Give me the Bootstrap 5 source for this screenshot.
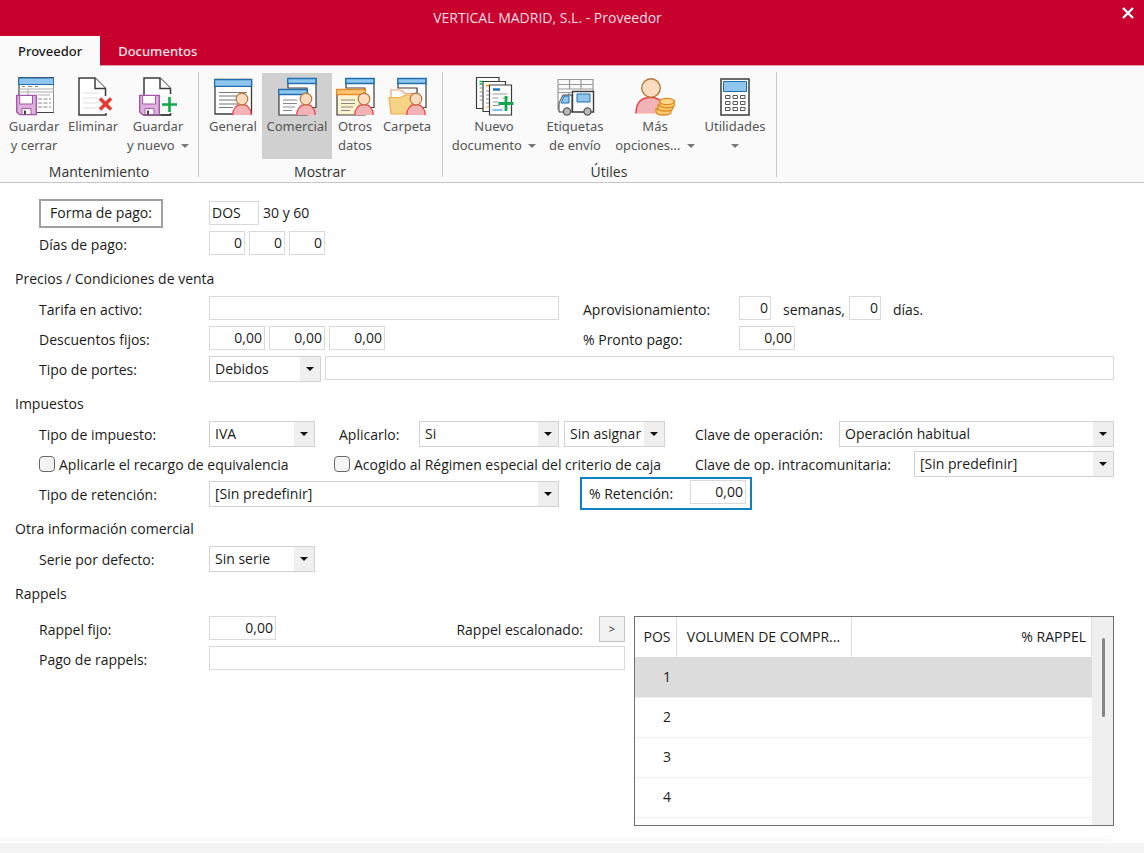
<!DOCTYPE html>
<html lang="es">
<head>
<meta charset="utf-8">
<meta name="viewport" content="width=device-width, initial-scale=1">
<title>VERTICAL MADRID, S.L. - Proveedor</title>
<link href="https://cdn.jsdelivr.net/npm/bootstrap@5.3.0/dist/css/bootstrap.min.css" rel="stylesheet">
<style>
  body { font-family: "Open Sans", "Noto Sans", sans-serif; font-size: 14px; line-height: 19px; color: #1b1b1b; background: #fff; }

  /* Title bar and tabs */
  .app-head { background: #c8002d; }
  .title-row { height: 36px; color: #fbdde3; }
  .title-row h1 { font-size: 14px; line-height: 36px; }
  .close-btn { width: 49px; height: 26px; color: #fff; }
  .app-tabs { height: 30px; border-bottom: 1px solid #d8a0aa; }
  .app-tabs .nav-link { font-family: "Noto Sans", sans-serif; font-size: 13px; height: 30px; padding: 0 18px; line-height: 31px; color: #fbe3e8; border: 0; border-radius: 0; font-weight: 500; }
  .app-tabs .nav-link.active { background: #fafafa; color: #1b1b1b; }

  /* Ribbon */
  .ribbon { background: #fafafa; border-bottom: 1px solid #c6c6c6; height: 117px; }
  .ribbon-group { border-right: 1px solid #c9c9c9; margin: 6px 0 5px; padding: 1px 6px 0 5px; }
  .ribbon-group:first-child { padding-right: 5px; }
  .ribbon-group h2 { font-size: 14px; line-height: 19px; margin: 3px 0 0; text-align: center; color: #333; font-weight: 400; }
  .tool { height: 86px; padding: 3px 0 0; border: 0; border-radius: 0; font-family: "Noto Sans", sans-serif; font-size: 13px; line-height: 19px; color: #555; white-space: nowrap; display: flex; flex-direction: column; align-items: center; }
  .tool svg.ico { width: 40px; height: 40px; margin-bottom: 1px; flex: none; }
  .tool.active, .tool:hover { background: #d0d0d0 !important; color: #555 !important; }
  .w46 { width: 46px; } .w58 { width: 58px; } .w60 { width: 60px; } .w70 { width: 70px; } .w90 { width: 90px; } .w92 { width: 92px; }
  .arrow { display: inline-block; border: 4px solid transparent; border-top-color: #777; border-bottom: 0; vertical-align: 2px; margin-left: 3px; }

  /* Form */
  .form-body { padding: 16px 30px 0 15px; }
  .form-body h2 { font-size: 14px; line-height: 30px; margin: 5px 0 0; font-weight: 400; }
  .form-body .line { display: flex; align-items: center; height: 30px; padding-left: 24px; }
  .cols-main { display: grid !important; grid-template-columns: minmax(0, 520fr) minmax(0, 555fr); }
  .cols-tax { display: grid !important; grid-template-columns: minmax(0, 656fr) minmax(0, 419fr); }
  .cols-rappel { display: grid; grid-template-columns: minmax(0, 1fr) 480px; column-gap: 9px; margin-top: 5px; }
  .lbl { width: 170px; flex: none; }
  .lbl.wide-r { width: 156px; }
  .box { height: 24px; border: 1px solid #d9d9d9; border-radius: 0; padding: 0 2px 2px; font-size: 14px; line-height: 20px; color: #1b1b1b; margin-bottom: 2px; background: #fff; min-width: 0; }
  .num { text-align: right; flex: none; }
  .n32 { width: 32px; } .n36 { width: 36px; } .n50 { width: 50px; } .n56 { width: 56px; } .n67 { width: 67px; }
  .pick { height: 26px; border: 1px solid #d2d2d2; border-radius: 0; padding: 0 20px 0 5px; font-size: 14px; line-height: 22px; color: #1b1b1b; appearance: none; min-width: 0;
    background: url("data:image/svg+xml,%3Csvg xmlns='http://www.w3.org/2000/svg' viewBox='0 0 8 4'%3E%3Cpath d='M0 0h8L4 4z' fill='%23111'/%3E%3C/svg%3E") right 6px center / 8px 4px no-repeat, linear-gradient(#efefef, #efefef) right center / 20px 100% no-repeat, #fff; }
  .pay-btn { width: 124px; height: 29px; border: 2px solid #a0a0a0; border-radius: 0; background: #fff; padding: 0; font-size: 14px; line-height: 24px; color: #1b1b1b; margin-bottom: 2px; }
  .tick { appearance: none; width: 16px; height: 16px; border: 1px solid #6a6a6a; border-radius: 4px; background: #f4f4f4; margin: 0 4px 0 0; flex: none; }
  .tick:checked { background: #0a84c8; }
  .highlight { border: 2px solid #0c82c4; height: 33px; width: 172px; margin: -4px 0 -2px 21px; padding: 0 4px 0 7px; }
  .more-btn { width: 26px; height: 26px; border: 1px solid #c4c4c4; border-radius: 0; background: #f2f2f2; padding: 0; font-size: 11px; line-height: 22px; color: #222; }

  /* Rappel list */
  .rappel-list { height: 210px; border: 1px solid #6f6f6f; overflow: hidden; margin-top: 2px; }
  .rappel-list table { font-size: 14px; line-height: 20px; table-layout: fixed; margin: 0; width: 100%; height: 200px; }
  .rappel-list th { height: 40px; font-weight: 400; border-right: 1px solid #ddd; padding: 0 5px; white-space: nowrap; }
  .rappel-list td { height: 40px; padding: 0 5px; border-bottom: 1px solid #ededed; }
  .rappel-list .current td { background: #dcdcdc; }
  .track { width: 21px; background: #efefef; padding: 21px 8px 0 10px; flex: none; }
  .thumb { height: 79px; background: #858585; border-radius: 2px; }

  .foot-rule { border-top: 2px solid #f9f9f9; margin-right: 34px; height: 4px; }
  .foot-bar { height: 10px; background: #f4f4f4; }
</style>
</head>
<body class="d-flex flex-column min-vh-100">

<!-- shared symbols for the ribbon -->
<svg width="0" height="0" class="d-none" aria-hidden="true">
  <symbol id="person" viewBox="0 0 20 23">
    <path d="M.7 23C1 16.500 4.500 12.500 10 12.500S19 16.500 19.300 23z" fill="#f2b3b6"/>
    <path d="M.7 23C1 16.500 4.500 12.500 10 12.500S19 16.500 19.300 23" fill="none" stroke="#e8434a" stroke-width="1.300"/>
    <circle cx="10" cy="7" r="5.800" fill="#fbdcc0" stroke="#b9763a" stroke-width="1.200"/>
  </symbol>
  <symbol id="floppy" viewBox="0 0 21 21">
    <path d="M.7.700h19.600v19.600H3.700L.7 17.500z" fill="#dcb2dc" stroke="#a556a8" stroke-width="1.400"/>
    <path d="M3.700 1v8.500h12.800V1z" fill="#fff" stroke="#a556a8"/>
    <path d="M6 20v-6h9v6z" fill="#fff" stroke="#a556a8"/><path d="M8 16h2v4H8z" fill="#444"/>
  </symbol>
</svg>

<header class="app-head">
  <div class="title-row d-flex">
    <h1 class="flex-fill text-center m-0 fw-normal">VERTICAL MADRID, S.L. - Proveedor</h1>
    <button type="button" class="close-btn btn p-0 ps-3 border-0 d-flex align-items-center justify-content-center" aria-label="Cerrar">
      <svg width="12" height="12" viewBox="0 0 12 12"><path d="M1 1l10 10M11 1l-10 10" stroke="#fff" stroke-width="2.400"/></svg>
    </button>
  </div>
  <nav class="app-tabs nav">
    <a class="nav-link active" href="#">Proveedor</a>
    <a class="nav-link" href="#">Documentos</a>
  </nav>
</header>

<div class="ribbon d-flex">
  <section class="ribbon-group">
    <div class="d-flex">
      <button type="button" class="btn tool w58">
        <svg class="ico" viewBox="0 0 40 40"><path d="M5 1.500h35v35H5z" fill="#fff" stroke="#444" stroke-width="1.200"/><path d="M4.700 2h35v6.500h-35z" fill="#8fc6ee" stroke="#1f6fb0" stroke-width="1.200"/><path d="M8 10.500h3m3 0h4m3 0h3" stroke="#888"/><path d="M5 13h35M5 16h35M14 13v6M24 19h12" stroke="#aaa"/><path d="M24 23h13M24 27h13M24 31h13" stroke="#888" stroke-dasharray="4 1.500"/><use href="#floppy" x="2" y="18.500" width="21" height="21"/></svg>
        <span>Guardar</span><span>y cerrar</span></button>
      <button type="button" class="btn tool w60">
        <svg class="ico" viewBox="0 0 40 40"><path d="M33 39H6V2h16l10.500 10.500V24" fill="#fff" stroke="#3c3c3c" stroke-width="1.500"/><path d="M22 2v10.500h10.500" fill="#fff" stroke="#3c3c3c" stroke-width="1.500"/><path d="M10 17h15M10 22h16M10 27h14M10 32h15" stroke="#ddd"/><path d="M25 20h9v20h-9z" fill="#fafafa"/><path d="M25 39h8v-2" fill="none" stroke="#3c3c3c" stroke-width="1.500"/><path d="M27 22.500l11 11M38 22.500l-11 11" stroke="#e8392f" stroke-width="3.500"/></svg>
        <span>Eliminar</span></button>
      <button type="button" class="btn tool w70">
        <svg class="ico" viewBox="0 0 40 40"><path d="M33 39H6V2h16l10.500 10.500V20" fill="#fff" stroke="#3c3c3c" stroke-width="1.500"/><path d="M22 2v10.500h10.500" fill="#fff" stroke="#3c3c3c" stroke-width="1.500"/><use href="#floppy" x="1" y="18.500" width="21" height="21"/><path d="M22.500 18h16v19h-16z" fill="#fafafa"/><path d="M23 39h9.500v-2" fill="none" stroke="#3c3c3c" stroke-width="1.500"/><path d="M31.500 21v15M24 28.500h15" stroke="#12a84c" stroke-width="2.600"/></svg>
        <span>Guardar</span><span>y nuevo <i class="arrow"></i></span></button>
    </div>
    <h2>Mantenimiento</h2>
  </section>

  <section class="ribbon-group">
    <div class="d-flex">
      <button type="button" class="btn tool w58">
        <svg class="ico" viewBox="0 0 40 40"><path d="M2 3.500h36.500V38H2z" fill="#fff" stroke="#3c3c3c" stroke-width="1.300"/><path d="M1.600 3.600h37v6.800h-37z" fill="#8fc6ee" stroke="#1f6fb0" stroke-width="1.300"/><path d="M6 16.500h28M6 20h20M6 24h19M6 28h19M6 31.500h14" stroke="#777" stroke-width="1.200"/><use href="#person" x="19" y="16" width="20" height="23"/></svg>
        <span>General</span></button>
      <button type="button" class="btn tool w70 active">
        <svg class="ico" viewBox="0 0 40 40"><path d="M11 12V2.500h28v29H30V12z" fill="#fff" stroke="#3c3c3c" stroke-width="1.200"/><path d="M10.800 2.500H39v5H10.800z" fill="#8fc6ee" stroke="#1f6fb0" stroke-width="1.300"/><path d="M2 13.500h28V39H2z" fill="#fff" stroke="#3c3c3c" stroke-width="1.200"/><path d="M1.800 13.500h28.400v5H1.800z" fill="#8fc6ee" stroke="#1f6fb0" stroke-width="1.300"/><path d="M6 24h14M6 27.500h14M6 31h12M6 34.500h9" stroke="#888" stroke-width="1.200"/><use href="#person" x="19" y="16" width="20" height="23"/></svg>
        <span>Comercial</span></button>
      <button type="button" class="btn tool w46">
        <svg class="ico" viewBox="0 0 40 40"><path d="M11 12V2.500h28v29H30V12z" fill="#fff" stroke="#3c3c3c" stroke-width="1.200"/><path d="M10.800 2.500H39v5H10.800z" fill="#8fc6ee" stroke="#1f6fb0" stroke-width="1.300"/><path d="M2 13.500h28V39H2z" fill="#fdf3cf" stroke="#3c3c3c" stroke-width="1.200"/><path d="M1.800 13.500h28.400v5H1.800z" fill="#fbc676" stroke="#e98a25" stroke-width="1.300"/><path d="M6 24h14M6 27.500h14M6 31h12M6 34.500h9" stroke="#888" stroke-width="1.200"/><use href="#person" x="19" y="16" width="20" height="23"/></svg>
        <span>Otros</span><span>datos</span></button>
      <button type="button" class="btn tool w58">
        <svg class="ico" viewBox="0 0 40 40"><path d="M11 12V2.500h28v29H30V12z" fill="#fff" stroke="#3c3c3c" stroke-width="1.200"/><path d="M10.800 2.500H39v5H10.800z" fill="#8fc6ee" stroke="#1f6fb0" stroke-width="1.300"/><path d="M4 24V14h10l4 3.500h12V30z" fill="#fff" stroke="#f0a070" stroke-width="1.200"/><path d="M2 21.500h12l4-2.500h12v19H4z" fill="#f6d486" stroke="#e5ae4c" stroke-width="1.200"/><use href="#person" x="19" y="16" width="20" height="23"/></svg>
        <span>Carpeta</span></button>
    </div>
    <h2>Mostrar</h2>
  </section>

  <section class="ribbon-group">
    <div class="d-flex">
      <button type="button" class="btn tool w92">
        <svg class="ico" viewBox="0 0 40 40"><g fill="#fff" stroke="#3c3c3c" stroke-width="1.200"><path d="M2.500 1.500H25v31H2.500z"/><path d="M9 5.500h22.500v30H9z"/><path d="M15.500 9h22v30h-22z"/></g><path d="M5.500 5.500H9M5.500 8h3" stroke="#12a84c" stroke-width="1.600"/><path d="M5.500 12h3m-3 4h3m-3 4h3m-3 4h3" stroke="#888"/><path d="M12 9.500h3" stroke="#f4a321" stroke-width="2"/><path d="M12 15h3m-3 4h3m-3 4h3m-3 4h3" stroke="#888"/><path d="M12 31h3" stroke="#f4a321"/><path d="M19 13.500h7" stroke="#1673b8" stroke-width="2.400"/><path d="M18.500 18h15M18.500 22h6m4 0h6M18.500 26h6M18.500 29.500h7" stroke="#999"/><path d="M18.500 34h10" stroke="#7ec0ee" stroke-width="2"/><path d="M32 20v15M24.500 27.500h15" stroke="#12a84c" stroke-width="2.800"/></svg>
        <span>Nuevo</span><span>documento <i class="arrow"></i></span></button>
      <button type="button" class="btn tool w70">
        <svg class="ico" viewBox="0 0 40 40"><path d="M3 3.500h35v13H3zM3 8.500h35M3 13h35M14.500 3.500v10M26 3.500v10M3 16v18M14 16v4" fill="none" stroke="#999" stroke-width="1.200"/><path d="M4 36v-9l4-8h9v17z" fill="#fff" stroke="#3c3c3c"/><path d="M6 27l3-7h5v7z" fill="#8fc6ee" stroke="#1f6fb0"/><path d="M17.500 15.500h21V36h-21z" fill="#fff" stroke="#3c3c3c" stroke-width="1.400"/><path d="M22 18h13v8H22z" fill="#8fc6ee" stroke="#1f6fb0"/><circle cx="12" cy="35.500" r="3.600" fill="#bbb" stroke="#555" stroke-width="1.300"/><circle cx="32.500" cy="35.500" r="3.600" fill="#bbb" stroke="#555" stroke-width="1.300"/></svg>
        <span>Etiquetas</span><span>de envío</span></button>
      <button type="button" class="btn tool w90">
        <svg class="ico" viewBox="0 0 40 40"><path d="M1 37.500C1 27 6 21.500 15.500 21.500S29 27 30 37.500z" fill="#f2b3b6"/><path d="M1 37.500C1 27 6 21.500 15.500 21.500c5 0 9 1.500 11 5" fill="none" stroke="#e8434a" stroke-width="1.400"/><circle cx="16" cy="12" r="9.300" fill="#fbdcc0" stroke="#b9763a" stroke-width="1.400"/><g fill="#fbc873" stroke="#e08a1c" stroke-width="1.300"><path d="M21 33v3c0 4 15 4 15 0v-3z"/><path d="M23 29v3c0 4 15 4 15 0v-3z"/><path d="M25 25v4c0 4 15 4 15-1v-3z"/><ellipse cx="32" cy="25.500" rx="7.300" ry="3.200" fill="#fdd88c"/></g></svg>
        <span>Más</span><span>opciones... <i class="arrow"></i></span></button>
      <button type="button" class="btn tool w70">
        <svg class="ico" viewBox="0 0 40 40"><path d="M6 3h28v36H6z" fill="#fff" stroke="#3c3c3c" stroke-width="1.500"/><path d="M8.500 5.500h23v10h-23z" fill="#8fc6ee" stroke="#1f6fb0"/><g fill="#fff" stroke="#555"><path d="M10.500 19.500h4.500v3h-4.500zM18 19.500h4.500v3H18zM25.500 19.500H30v3h-4.500zM10.500 25.500h4.500v3h-4.500zM18 25.500h4.500v3H18zM25.500 25.500H30v3h-4.500zM10.500 31.500h4.500v3h-4.500zM18 31.500h4.500v3H18zM25.500 31.500H30v3h-4.500z"/></g></svg>
        <span>Utilidades</span><span><i class="arrow m-0"></i></span></button>
    </div>
    <h2>Útiles</h2>
  </section>
</div>

<main class="form-body flex-fill">
  <div class="line">
    <div class="lbl"><button type="button" class="pay-btn btn">Forma de pago:</button></div>
    <input class="box n50" type="text" value="DOS" aria-label="Forma de pago"><span class="ms-1 pb-1">30 y 60</span>
  </div>
  <div class="line">
    <label class="lbl" for="dia1">Días de pago:</label>
    <div class="d-flex gap-1">
      <input id="dia1" class="box num n36" type="text" value="0"><input class="box num n36" type="text" value="0" aria-label="Segundo día"><input class="box num n36" type="text" value="0" aria-label="Tercer día">
    </div>
  </div>

  <h2>Precios / Condiciones de venta</h2>
  <div class="line cols-main">
    <div class="d-flex align-items-center"><label class="lbl" for="tarifa">Tarifa en activo:</label><input id="tarifa" class="box flex-fill" type="text"></div>
    <div class="d-flex align-items-center ps-4"><label class="lbl wide-r" for="sem">Aprovisionamiento:</label><input id="sem" class="box num n32" type="text" value="0"><label class="ps-2 pe-1 mx-1 ms-1 me-0" for="dias">semanas,</label><input id="dias" class="box num n32" type="text" value="0"><label class="ps-2 ms-1" for="dias">días.</label></div>
  </div>
  <div class="line cols-main">
    <div class="d-flex align-items-center"><label class="lbl" for="dto1">Descuentos fijos:</label>
      <div class="d-flex gap-1"><input id="dto1" class="box num n56" type="text" value="0,00"><input class="box num n56" type="text" value="0,00" aria-label="Segundo descuento"><input class="box num n56" type="text" value="0,00" aria-label="Tercer descuento"></div></div>
    <div class="d-flex align-items-center ps-4"><label class="lbl wide-r" for="pronto">% Pronto pago:</label><input id="pronto" class="box num n56" type="text" value="0,00"></div>
  </div>
  <div class="line">
    <label class="lbl" for="portes">Tipo de portes:</label>
    <select id="portes" class="pick me-1" style="width:112px"><option>Debidos</option></select>
    <input class="box flex-fill" type="text" aria-label="Detalle de portes">
  </div>

  <h2>Impuestos</h2>
  <div class="line cols-tax">
    <div class="d-flex align-items-center">
      <label class="lbl" for="imp">Tipo de impuesto:</label>
      <select id="imp" class="pick me-4" style="width:106px"><option>IVA</option></select>
      <label for="apl" style="width:80px">Aplicarlo:</label>
      <select id="apl" class="pick flex-fill"><option>Si</option></select>
      <select class="pick" style="width:101px;margin:0 30px 0 5px" aria-label="Asignación"><option>Sin asignar</option></select>
    </div>
    <div class="d-flex align-items-center"><label for="clave" style="width:144px">Clave de operación:</label><select id="clave" class="pick flex-fill"><option>Operación habitual</option></select></div>
  </div>
  <div class="line cols-tax">
    <div class="d-flex align-items-center">
      <div class="d-flex align-items-center" style="width:295px"><input id="recargo" class="tick" type="checkbox"><label for="recargo">Aplicarle el recargo de equivalencia</label></div>
      <div class="d-flex align-items-center text-nowrap"><input id="caja" class="tick" type="checkbox"><label for="caja">Acogido al Régimen especial del criterio de caja</label></div>
    </div>
    <div class="d-flex align-items-center"><label for="intra" style="width:219px">Clave de op. intracomunitaria:</label><select id="intra" class="pick flex-fill"><option>[Sin predefinir]</option></select></div>
  </div>
  <div class="line cols-main">
    <div class="d-flex align-items-center"><label class="lbl" for="ret">Tipo de retención:</label><select id="ret" class="pick flex-fill"><option>[Sin predefinir]</option></select></div>
    <div class="d-flex align-items-center"><div class="highlight d-flex align-items-center justify-content-between"><label for="pret">% Retención:</label><input id="pret" class="box num n56" type="text" value="0,00"></div></div>
  </div>

  <h2>Otra información comercial</h2>
  <div class="line">
    <label class="lbl" for="serie">Serie por defecto:</label>
    <select id="serie" class="pick" style="width:106px"><option>Sin serie</option></select>
  </div>

  <h2>Rappels</h2>
  <div class="cols-rappel">
    <div>
      <div class="line">
        <label class="lbl" for="fijo">Rappel fijo:</label><input id="fijo" class="box num n67" type="text" value="0,00">
        <label class="ms-auto me-3" for="esc">Rappel escalonado:</label><button id="esc" type="button" class="more-btn btn">&gt;</button>
      </div>
      <div class="line"><label class="lbl" for="pagor">Pago de rappels:</label><input id="pagor" class="box flex-fill" type="text"></div>
    </div>
    <div class="rappel-list d-flex">
      <table>
        <colgroup><col style="width:41px"><col style="width:175px"><col></colgroup>
        <thead><tr><th class="text-end">POS</th><th class="text-center">VOLUMEN DE COMPR...</th><th class="text-end">% RAPPEL</th></tr></thead>
        <tbody>
          <tr class="current"><td class="text-end">1</td><td></td><td></td></tr>
          <tr><td class="text-end">2</td><td></td><td></td></tr>
          <tr><td class="text-end">3</td><td></td><td></td></tr>
          <tr><td class="text-end">4</td><td></td><td></td></tr>
          <tr><td></td><td></td><td></td></tr>
        </tbody>
      </table>
      <div class="track"><div class="thumb"></div></div>
    </div>
  </div>
</main>

<footer>
  <div class="foot-rule"></div>
  <div class="foot-bar"></div>
</footer>
<script src="https://cdn.jsdelivr.net/npm/bootstrap@5.3.0/dist/js/bootstrap.bundle.min.js"></script>
</body>
</html>
